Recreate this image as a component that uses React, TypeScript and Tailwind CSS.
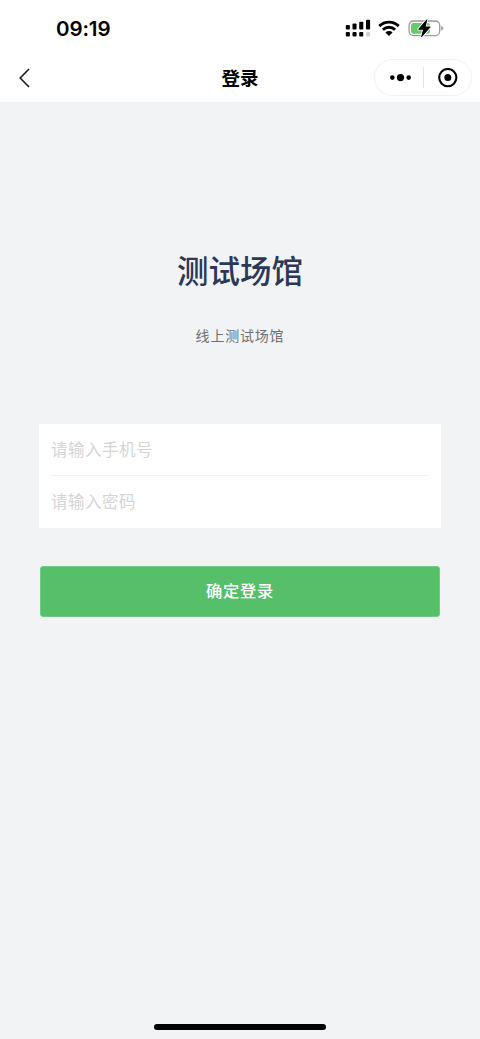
import React from 'react';

function CellularIcon() {
  return (
    <svg className="block" width="26" height="18" viewBox="0 0 26 18">
      <g fill="#000">
        <rect x="0.8" y="5.9" width="4.1" height="4.7" rx="1" />
        <rect x="7.5" y="4.6" width="4.1" height="6" rx="1" />
        <rect x="14.2" y="2.8" width="4.1" height="7.8" rx="1" />
        <rect x="21" y="0.8" width="4.1" height="9.8" rx="1" />
        <rect x="0.8" y="13" width="4.1" height="4.6" rx="1" />
        <rect x="7.5" y="13" width="4.1" height="4.6" rx="1" />
        <rect x="14.2" y="13" width="4.1" height="4.6" rx="1" />
      </g>
      <rect x="21" y="13" width="4.1" height="4.6" rx="1" fill="#d0d0d0" />
    </svg>
  );
}

function WifiIcon() {
  return (
    <svg className="block" width="22" height="17" viewBox="0 0 22 17">
      <g fill="none" stroke="#000" strokeWidth="2.9">
        <path d="M1.3 6.1 A13.8 13.8 0 0 1 20.7 6.1" />
        <path d="M4.9 9.8 A8.7 8.7 0 0 1 17.1 9.8" />
      </g>
      <path d="M11 16 L7.4 12.4 A5.1 5.1 0 0 1 14.6 12.4 Z" fill="#000" />
    </svg>
  );
}

function BatteryIcon() {
  return (
    <svg className="block" width="36" height="20" viewBox="0 0 36 20">
      <rect x="1.1" y="3" width="30.6" height="14.6" rx="4.4" fill="none" stroke="#9b9b9b" strokeWidth="1.3" />
      <path d="M33.1 8 Q35.2 8.6 35.2 10.3 Q35.2 12 33.1 12.6 Z" fill="#9b9b9b" />
      <rect x="3" y="4.9" width="19" height="10.8" rx="2.4" fill="#65cb69" />
      <path
        d="M18.8 1.8 L10.6 11.3 H15.6 L13.6 18.8 L22.2 8.9 H17.2 Z"
        fill="#000"
        stroke="#fff"
        strokeWidth="2.6"
        paintOrder="stroke"
        strokeLinejoin="round"
      />
      <path
        d="M18.8 1.8 L10.6 11.3 H15.6 L13.6 18.8 L22.2 8.9 H17.2 Z"
        fill="#000"
        stroke="#000"
        strokeWidth="0.8"
        strokeLinejoin="round"
      />
    </svg>
  );
}

function StatusBar() {
  return (
    <div className="flex h-[54px] items-start justify-between pl-[56px] pr-[36px]">
      <span className="pt-[15px] font-['Inter','Liberation_Sans',sans-serif] text-[20.5px] leading-[28px] font-semibold tracking-[-0.1px]">
        09:19
      </span>
      <div className="flex items-center pt-[18px]">
        <CellularIcon />
        <div className="ml-[7px]">
          <WifiIcon />
        </div>
        <div className="ml-[8px]">
          <BatteryIcon />
        </div>
      </div>
    </div>
  );
}

function NavBar() {
  return (
    <div className="grid h-[48px] grid-cols-[120px_1fr_120px] items-start">
      <button className="flex h-[47px] items-center pl-[18px]" aria-label="返回">
        <svg width="13" height="20" viewBox="0 0 13 20">
          <path d="M11 1 L2.2 10 L11 19" fill="none" stroke="#1c1c1c" strokeWidth="1.6" />
        </svg>
      </button>
      <h1 className="text-center text-[18.5px] leading-[46px] font-bold">登录</h1>
      <div className="mt-[5px] ml-[14px] flex h-[37px] w-[98px] items-center rounded-full border border-[#f2f2f2]">
        <div className="flex h-full w-[48px] items-center justify-center pl-[3px]">
          <svg width="22" height="8" viewBox="0 0 22 8">
            <circle cx="2.3" cy="3.6" r="2.3" />
            <circle cx="10.5" cy="3.6" r="3.6" />
            <circle cx="18.7" cy="3.6" r="2.3" />
          </svg>
        </div>
        <div className="h-[21px] w-px bg-[#e5e5e5]" />
        <div className="flex h-full flex-1 items-center justify-center">
          <svg width="20" height="20" viewBox="0 0 20 20">
            <circle cx="9.8" cy="9.6" r="8.6" fill="none" stroke="#000" strokeWidth="2.1" />
            <circle cx="9.8" cy="9.6" r="3.5" />
          </svg>
        </div>
      </div>
    </div>
  );
}

export default function App() {
  return (
    <div className="flex h-[1039px] w-[480px] flex-col bg-[#f1f3f5] font-['Noto_Sans_CJK_SC',sans-serif] text-black">
      <header className="h-[102px] shrink-0 bg-white">
        <StatusBar />
        <NavBar />
      </header>
      <main className="flex flex-1 flex-col items-center">
        <h2 className="mt-[143px] text-[31.5px] leading-[48px] font-medium text-[#2b3856]">测试场馆</h2>
        <p className="mt-[30px] text-[14px] leading-[24px] tracking-[0.8px] text-[#707070]">线上测试场馆</p>
        <form className="mt-[77px] w-[402px] bg-white px-[13px]">
          <input
            className="-ml-px block h-[52px] w-[377px] border-b border-[#f3f3f3] pb-px text-[16.5px] tracking-[0.5px] outline-none placeholder:text-[#d5d5d5]"
            placeholder="请输入手机号"
          />
          <input
            className="-ml-px block h-[52px] w-[377px] pb-[3px] text-[16.5px] tracking-[0.5px] outline-none placeholder:text-[#d5d5d5]"
            placeholder="请输入密码"
          />
        </form>
        <button className="mt-[38px] h-[51px] w-[400px] rounded-[3px] border border-[#72c983] bg-[#57bf6a] pb-[3px] text-[16.3px] font-medium tracking-[0.7px] text-white">
          确定登录
        </button>
      </main>
      <div className="mb-[9px] h-[6px] w-[172px] shrink-0 self-center rounded-full bg-black" />
    </div>
  );
}
